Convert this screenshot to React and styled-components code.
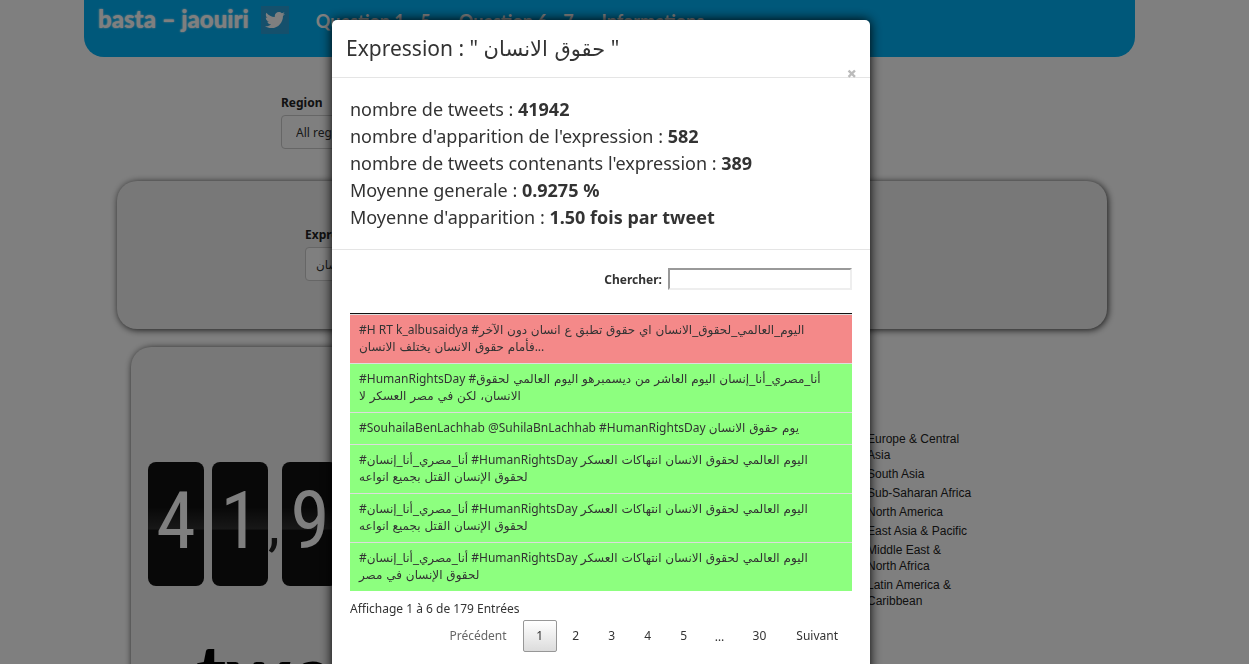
import React from "react";
import styled, { createGlobalStyle } from "styled-components";
import { FaTwitter } from "react-icons/fa";

const text = '"Noto Sans", "DejaVu Sans", sans-serif';
const brand = '"Lato", "DejaVu Sans", sans-serif';

const Global = createGlobalStyle`
  * { box-sizing: border-box; }
  body {
    margin: 0;
    overflow: hidden;
    background: #fff;
    color: #333;
    font: 12px/17px ${text};
  }
  button, input, select { font: inherit; color: inherit; }
`;

const Page = styled.div`
  padding: 0 114px 0 84px;
`;
const Navbar = styled.header`
  display: flex;
  height: 57px;
  padding: 5px 14px;
  align-items: flex-start;
  background: #00b0f4;
  border-radius: 0 0 20px 20px;
  color: #fff;
  font: 700 18px/32px ${brand};
  white-space: nowrap;
  a { color: inherit; text-decoration: none; }
`;
const Brand = styled.a`
  font: 900 24px/28px ${brand};
  text-shadow: 0 0 2px #fff;
`;
const TwitterLink = styled.a`
  display: grid;
  place-items: center;
  width: 28px;
  height: 28px;
  margin: 1px 27px 0 12px;
  background: #2aa0d8;
  svg { width: 20px; height: 20px; }
`;
const NavLinks = styled.nav`
  display: flex;
  gap: 28px;
`;

const Field = styled.div`
  display: flex;
  flex-direction: column;
  align-items: flex-start;
  gap: 3px;
  label { font-weight: 700; line-height: 18px; color: #222; }
  select {
    appearance: none;
    width: 260px;
    height: 34px;
    padding: 0 ${(p) => (p.$tight ? 10 : 14)}px;
    border: 1px solid #ccc;
    border-radius: 4px;
    background: #fff;
  }
`;
const RegionBar = styled.div`
  padding: 37px 0 32px 197px;
`;
const Panel = styled.section`
  background: #f0f0f0;
  border-radius: 20px;
  box-shadow: 1px 1px 7px #333;
`;
const FilterPanel = styled(Panel)`
  margin: 0 28px 18px 33px;
  padding: 45px 0 48px 188px;
`;
const Lower = styled.div`
  display: flex;
  padding-left: 47px;
`;
const CounterPanel = styled(Panel)`
  width: 540px;
  height: 560px;
  flex: none;
  padding: 115px 17px 0;
`;
const Counter = styled.div`
  display: flex;
  align-items: flex-start;
`;
const Digit = styled.span`
  width: 56px;
  height: 124px;
  margin-right: 8px;
  border-radius: 8px;
  background: linear-gradient(#101010 0 36%, #303030 54%, #101010 55%);
  color: #fff;
  font: 400 80px/118px "Liberation Sans Narrow", "Roboto Condensed", Roboto, sans-serif;
  text-align: center;
`;
const Comma = styled.span`
  width: 14px;
  margin-left: -8px;
  color: #222;
  font: 400 60px/124px Roboto, sans-serif;
`;
const CounterLabel = styled.div`
  padding: 41px 0 0 48px;
  color: #000;
  font: 900 80px/90px ${brand};
`;
const Legend = styled.ul`
  width: 105px;
  margin: 84px 0 0 196px;
  padding: 0;
  list-style: none;
  color: #222;
  font: 12px/16px "Liberation Sans", Arial, sans-serif;
  li { margin-bottom: 3px; }
`;

const Overlay = styled.div`
  position: fixed;
  inset: 0;
  overflow: hidden;
  display: flex;
  justify-content: center;
  align-items: flex-start;
  padding: 20px 47px 0 0;
  background: rgba(0, 0, 0, 0.5);
`;
const Dialog = styled.section`
  width: 538px;
  background: #fff;
  border-radius: 5px;
  box-shadow: 0 0 12px #000;
`;
const DialogHeader = styled.header`
  position: relative;
  padding: 12px 14px 13px;
  border-bottom: 1px solid #e5e5e5;
  h2 { margin: 0; font-size: 21px; line-height: 32px; font-weight: 400; }
`;
const CloseButton = styled.button`
  position: absolute;
  right: 13px;
  bottom: -5px;
  padding: 0;
  border: 0;
  background: none;
  color: #bbb;
  font: 900 18px/18px ${text};
`;
const Stats = styled.div`
  padding: 18px 18px;
  border-bottom: 1px solid #e5e5e5;
  font-size: 18px;
  line-height: 27px;
  p { margin: 0; }
`;
const Results = styled.div`
  padding: 18px 18px 40px;
`;
const Search = styled.div`
  display: flex;
  justify-content: flex-end;
  align-items: center;
  gap: 6px;
  margin-bottom: 23px;
  font-weight: 700;
  input {
    width: 184px;
    height: 22px;
    border: 2px solid;
    border-color: #999 #eee #eee #999;
    background: #fff;
  }
`;
const TweetTable = styled.table`
  width: 100%;
  border-collapse: separate;
  border-spacing: 0;
  border-top: 1px solid #111;
`;
const Tweet = styled.tr`
  background: ${(p) => (p.$negative ? "#f48989" : "#8dff7f")};
  td { padding: 6px 9px 8px; border-top: 1px solid #ddd; white-space: nowrap; }
`;
const Arabic = styled.span`
  font-family: "DejaVu Sans", sans-serif;
  font-size: ${(p) => p.$size || 12}px;
  line-height: 0;
`;
const Info = styled.p`
  margin: 9px 0 3px;
`;
const Pager = styled.nav`
  display: flex;
  justify-content: flex-end;
  align-items: center;
  gap: 2px;
`;
const PageButton = styled.button`
  height: 32px;
  min-width: 34px;
  padding: 0 ${(p) => (p.$wide ? 13 : 12)}px 2px;
  border: 1px solid ${(p) => (p.$current ? "#979797" : "transparent")};
  border-radius: 2px;
  background: ${(p) => (p.$current ? "linear-gradient(#fff, #dcdcdc)" : "none")};
  color: ${(p) => (p.disabled ? "#666" : "#333")};
`;
const Ellipsis = styled.span`
  width: 34px;
  text-align: center;
`;

const stats = [
  ["nombre de tweets", "41942"],
  ["nombre d'apparition de l'expression", "582"],
  ["nombre de tweets contenants l'expression", "389"],
  ["Moyenne generale", "0.9275 %"],
  ["Moyenne d'apparition", "1.50 fois par tweet"],
];

const repeated = "#أنا_مصري_أنا_إنسان #HumanRightsDay اليوم العالمي لحقوق الانسان انتهاكات العسكر";
const tweets = [
  { negative: true, lines: ["#H RT k_albusaidya #اليوم_العالمي_لحقوق_الانسان اي حقوق تطبق ع انسان دون الآخر", "فأمام حقوق الانسان يختلف الانسان..."] },
  { lines: ["#HumanRightsDay #أنا_مصري_أنا_إنسان اليوم العاشر من ديسمبرهو اليوم العالمي لحقوق", "الانسان، لكن في مصر العسكر لا"] },
  { lines: ["#SouhailaBenLachhab @SuhilaBnLachhab #HumanRightsDay يوم حقوق الانسان"] },
  { lines: [repeated, "لحقوق الإنسان القتل بجميع انواعه"] },
  { lines: [repeated, "لحقوق الإنسان القتل بجميع انواعه"] },
  { lines: [repeated, "لحقوق الإنسان في مصر"] },
];

const regions = ["Europe & Central Asia", "South Asia", "Sub-Saharan Africa", "North America", "East Asia & Pacific", "Middle East & North Africa", "Latin America & Caribbean"];

const arabicRun = /([\u0600-\u06FF][\u0600-\u06FF_ ]*[\u0600-\u06FF])/;
const mixed = (line) =>
  line.split(arabicRun).map((part, i) => (i % 2 ? <Arabic key={i}>{part}</Arabic> : part));

export default function App() {
  return (
    <>
      <Global />
      <Page>
        <Navbar>
          <Brand href="#">basta – jaouiri</Brand>
          <TwitterLink href="#" aria-label="Twitter"><FaTwitter /></TwitterLink>
          <NavLinks>
            <a href="#">Question 1 - 5</a>
            <a href="#">Question 6 - 7</a>
            <a href="#">Informations</a>
          </NavLinks>
        </Navbar>
        <RegionBar>
          <Field>
            <label htmlFor="region">Region</label>
            <select id="region"><option>All regions</option></select>
          </Field>
        </RegionBar>
        <FilterPanel>
          <Field $tight>
            <label htmlFor="expression">Expression</label>
            <select id="expression"><option>حقوق الانسان</option></select>
          </Field>
        </FilterPanel>
        <Lower>
          <CounterPanel>
            <Counter>
              <Digit>4</Digit>
              <Digit>1</Digit>
              <Comma>,</Comma>
              <Digit>9</Digit>
              <Digit>4</Digit>
              <Digit>2</Digit>
            </Counter>
            <CounterLabel>tweets</CounterLabel>
          </CounterPanel>
          <Legend>
            {regions.map((r) => <li key={r}>{r}</li>)}
          </Legend>
        </Lower>
      </Page>
      <Overlay>
        <Dialog role="dialog" aria-labelledby="dialog-title">
          <DialogHeader>
            <h2 id="dialog-title">Expression : " <Arabic $size={21}>حقوق الانسان</Arabic> "</h2>
            <CloseButton aria-label="Fermer">×</CloseButton>
          </DialogHeader>
          <Stats>
            {stats.map(([name, value]) => (
              <p key={name}>{name} : <b>{value}</b></p>
            ))}
          </Stats>
          <Results>
            <Search>
              <label htmlFor="search">Chercher:</label>
              <input id="search" type="search" />
            </Search>
            <TweetTable>
              <tbody>
                {tweets.map((t, i) => (
                  <Tweet key={i} $negative={t.negative}>
                    <td>
                      {t.lines.map((line, j) => (
                        <React.Fragment key={j}>{j > 0 && <br />}{mixed(line)}</React.Fragment>
                      ))}
                    </td>
                  </Tweet>
                ))}
              </tbody>
            </TweetTable>
            <Info>Affichage 1 à 6 de 179 Entrées</Info>
            <Pager>
              <PageButton disabled $wide>Précédent</PageButton>
              <PageButton $current>1</PageButton>
              <PageButton>2</PageButton>
              <PageButton>3</PageButton>
              <PageButton>4</PageButton>
              <PageButton>5</PageButton>
              <Ellipsis>…</Ellipsis>
              <PageButton $wide>30</PageButton>
              <PageButton $wide>Suivant</PageButton>
            </Pager>
          </Results>
        </Dialog>
      </Overlay>
    </>
  );
}
